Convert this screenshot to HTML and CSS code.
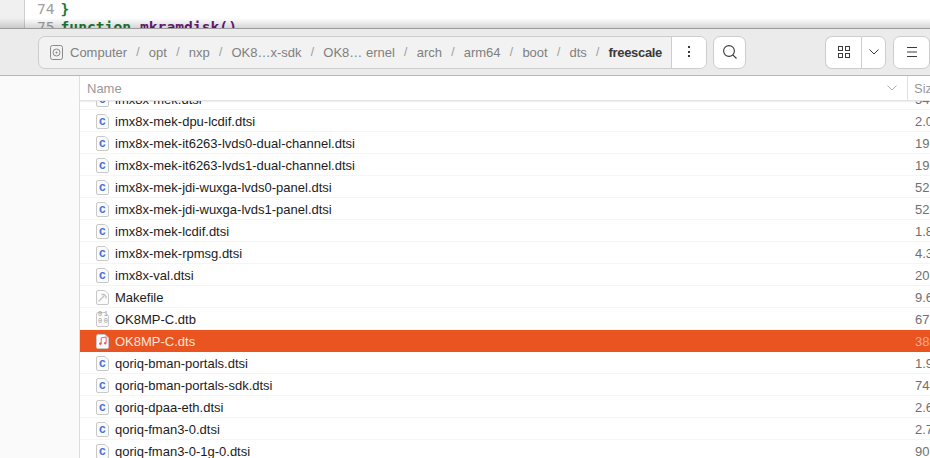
FILE: index.html
```html
<!DOCTYPE html>
<html lang="en">
<head>
  <meta charset="UTF-8">
  <title>freescale</title>
  <link rel="stylesheet" href="styles.css">
</head>
<body>

<svg class="defs" width="0" height="0">
  <symbol id="page" viewBox="0 0 13 15">
    <path d="M2 .5h7l3.500 3.500V13A1.500 1.500 0 0 1 11 14.500H2A1.500 1.500 0 0 1 .5 13V2A1.500 1.500 0 0 1 2 .5z" fill="#fbfbfb" stroke="#c8c8c8"/>
  </symbol>
</svg>

<div class="code">
  <div class="gutter"></div>
  <div class="lines">
    <div class="line"><span class="num">74</span> <b class="green">}</b></div>
    <div class="line"><span class="num">75</span> <b class="green">function</b> <b class="purple">mkramdisk()</b></div>
  </div>
</div>

<div class="window">
  <header class="toolbar">
    <nav class="pathbar">
      <svg class="disk" width="13" height="15" viewBox="0 0 13 15">
        <rect x=".5" y=".5" width="12" height="14" rx="2" fill="none" stroke="#8a8a8a"/>
        <circle cx="6.500" cy="7.500" r="3.500" fill="none" stroke="#8a8a8a"/>
        <circle cx="6.500" cy="7.500" r="1" fill="#8a8a8a"/>
      </svg>
      <span class="crumb first">Computer</span><i>/</i>
      <span class="crumb">opt</span><i>/</i>
      <span class="crumb">nxp</span><i>/</i>
      <span class="crumb">OK8…x-sdk</span><i>/</i>
      <span class="crumb">OK8… ernel</span><i>/</i>
      <span class="crumb">arch</span><i>/</i>
      <span class="crumb">arm64</span><i>/</i>
      <span class="crumb">boot</span><i>/</i>
      <span class="crumb">dts</span><i>/</i>
      <span class="crumb current">freescale</span>
      <button class="path-menu">
        <svg width="4" height="14" viewBox="0 0 4 14"><g fill="#3a3a3a"><rect x="1" y="1" width="2" height="2"/><rect x="1" y="6" width="2" height="2"/><rect x="1" y="10" width="2" height="2"/></g></svg>
      </button>
    </nav>
    <button class="btn search">
      <svg width="14" height="14" viewBox="0 0 14 14" fill="none" stroke="#3a3a3a" stroke-width="1.100"><circle cx="6" cy="6" r="5.400"/><path d="M9.800 9.800L13.500 13.500"/></svg>
    </button>
    <div class="view-group">
      <button class="btn grid">
        <svg width="12" height="12" viewBox="0 0 12 12" fill="none" stroke="#3a3a3a"><rect x=".5" y=".5" width="4" height="4"/><rect x="7.500" y=".5" width="4" height="4"/><rect x=".5" y="7.500" width="4" height="4"/><rect x="7.500" y="7.500" width="4" height="4"/></svg>
      </button>
      <button class="btn arrow">
        <svg width="10" height="6" viewBox="0 0 10 6" fill="none" stroke="#3a3a3a"><path d="M.5 .5L5 5l4.500-4.500"/></svg>
      </button>
    </div>
    <button class="btn menu">
      <svg width="10" height="10" viewBox="0 0 10 10" fill="none" stroke="#3a3a3a"><path d="M0 .5h10M0 5h10M0 9.500h10"/></svg>
    </button>
  </header>

  <div class="content">
    <aside class="sidebar"></aside>
    <section class="files">
      <div class="head">
        <div class="col-name">Name
          <svg width="10" height="6" viewBox="0 0 10 6" fill="none" stroke="#adadad"><path d="M.5 .5L5 5l4.500-4.500"/></svg>
        </div>
        <div class="col-size">Size</div>
      </div>
      <div class="viewport">
        <ul class="rows">
          <li><svg class="ic"><use href="#page"/></svg><b class="c">c</b><span class="name">imx8x-mek.dtsi</span><span class="size">54.1 kB</span></li>
          <li><svg class="ic"><use href="#page"/></svg><b class="c">c</b><span class="name">imx8x-mek-dpu-lcdif.dtsi</span><span class="size">2.0 kB</span></li>
          <li><svg class="ic"><use href="#page"/></svg><b class="c">c</b><span class="name">imx8x-mek-it6263-lvds0-dual-channel.dtsi</span><span class="size">19.6 kB</span></li>
          <li><svg class="ic"><use href="#page"/></svg><b class="c">c</b><span class="name">imx8x-mek-it6263-lvds1-dual-channel.dtsi</span><span class="size">19.6 kB</span></li>
          <li><svg class="ic"><use href="#page"/></svg><b class="c">c</b><span class="name">imx8x-mek-jdi-wuxga-lvds0-panel.dtsi</span><span class="size">52.7 kB</span></li>
          <li><svg class="ic"><use href="#page"/></svg><b class="c">c</b><span class="name">imx8x-mek-jdi-wuxga-lvds1-panel.dtsi</span><span class="size">52.7 kB</span></li>
          <li><svg class="ic"><use href="#page"/></svg><b class="c">c</b><span class="name">imx8x-mek-lcdif.dtsi</span><span class="size">1.8 kB</span></li>
          <li><svg class="ic"><use href="#page"/></svg><b class="c">c</b><span class="name">imx8x-mek-rpmsg.dtsi</span><span class="size">4.3 kB</span></li>
          <li><svg class="ic"><use href="#page"/></svg><b class="c">c</b><span class="name">imx8x-val.dtsi</span><span class="size">20.1 kB</span></li>
          <li>
            <svg class="ic"><use href="#page"/></svg>
            <svg class="glyph" width="9" height="9" viewBox="0 0 9 9" fill="none" stroke="#c0c0c0" stroke-width="1.300"><path d="M.5 8.500L6 3M3.500 1.500h2.500l2 2v2"/></svg>
            <span class="name">Makefile</span><span class="size">9.6 kB</span>
          </li>
          <li>
            <svg class="ic"><use href="#page"/></svg>
            <span class="glyph bin">01<br>00</span>
            <span class="name">OK8MP-C.dtb</span><span class="size">67.4 kB</span>
          </li>
          <li class="selected">
            <svg class="ic"><use href="#page"/></svg>
            <svg class="glyph note" width="8" height="10" viewBox="0 0 9 10" fill="none" stroke="#ef5a6c" stroke-width="1.100"><path d="M2.500 8V1.500l5.500-1V7"/><circle cx="1.500" cy="8" r="1" fill="#ef5a6c"/><circle cx="7" cy="7.500" r="1" fill="#ef5a6c"/></svg>
            <span class="name">OK8MP-C.dts</span><span class="size">38.2 kB</span>
          </li>
          <li><svg class="ic"><use href="#page"/></svg><b class="c">c</b><span class="name">qoriq-bman-portals.dtsi</span><span class="size">1.9 kB</span></li>
          <li><svg class="ic"><use href="#page"/></svg><b class="c">c</b><span class="name">qoriq-bman-portals-sdk.dtsi</span><span class="size">746 B</span></li>
          <li><svg class="ic"><use href="#page"/></svg><b class="c">c</b><span class="name">qoriq-dpaa-eth.dtsi</span><span class="size">2.6 kB</span></li>
          <li><svg class="ic"><use href="#page"/></svg><b class="c">c</b><span class="name">qoriq-fman3-0.dtsi</span><span class="size">2.7 kB</span></li>
          <li><svg class="ic"><use href="#page"/></svg><b class="c">c</b><span class="name">qoriq-fman3-0-1g-0.dtsi</span><span class="size">907 B</span></li>
        </ul>
      </div>
    </section>
  </div>
</div>

</body>
</html>
```

FILE: styles.css
```css
html, body {
  margin: 0;
  height: 458px;
  overflow: hidden;
  background: #fff;
  font-family: "Liberation Sans", sans-serif;
  font-size: 13px;
}
.defs {
  display: block;
  height: 0;
}
button {
  padding: 0;
  font: inherit;
  cursor: pointer;
}

/* editor behind the window */
.code {
  display: flex;
  height: 28px;
  overflow: hidden;
  position: relative;
  background: #fff;
}
.code::after {
  content: "";
  position: absolute;
  left: 0;
  right: 0;
  bottom: 0;
  height: 10px;
  background: linear-gradient(rgba(0, 0, 0, 0), rgba(0, 0, 0, .16));
}
.gutter {
  width: 24px;
  background: #f0f0f0;
  border-right: 1px solid #d0d0d0;
}
.lines {
  padding: 0 0 0 12px;
  font-family: "DejaVu Sans Mono", monospace;
  font-size: 14.67px;
  line-height: 18px;
}
.line {
  white-space: pre;
}
.num {
  color: #a0a0a0;
  margin-right: -3px;
}
.green {
  color: #1e7d32;
}
.purple {
  color: #6a1b7a;
}

.window {
  height: 430px;
  display: flex;
  flex-direction: column;
  border-top: 1px solid #9c9c9c;
  box-sizing: border-box;
}

/* toolbar */
.toolbar {
  height: 47px;
  flex: none;
  box-sizing: border-box;
  display: flex;
  align-items: center;
  padding: 0 0 0 38px;
  background: #ebebeb;
  border-bottom: 1px solid #b8b8b8;
  overflow: hidden;
}
.pathbar {
  width: 669px;
  height: 33px;
  box-sizing: border-box;
  flex: none;
  display: flex;
  align-items: center;
  padding-left: 11px;
  background: #f2f2f2;
  border: 1px solid #cdcdcd;
  border-radius: 7px;
  color: #808080;
  white-space: nowrap;
}
.crumb.first {
  margin-left: 7px;
}
.pathbar i {
  margin: 0 9.22px;
  font-style: normal;
  color: #9a9a9a;
  font-size: 12px;
}
.crumb.current {
  color: #3a3a3a;
  font-weight: bold;
  letter-spacing: -.33px;
}
.path-menu {
  margin-left: auto;
  width: 35px;
  height: 31px;
  display: flex;
  align-items: center;
  justify-content: center;
  background: #fff;
  border: 0;
  border-left: 1px solid #cdcdcd;
  border-radius: 0 6px 6px 0;
}
.btn {
  height: 33px;
  display: flex;
  align-items: center;
  justify-content: center;
  background: #fff;
  border: 1px solid #cdcdcd;
  border-radius: 7px;
}
.search {
  width: 36px;
  margin-left: 6px;
}
.view-group {
  display: flex;
  margin-left: 79px;
}
.grid {
  width: 36px;
  border-right: 0;
  border-radius: 7px 0 0 7px;
}
.arrow {
  width: 25px;
  border-radius: 0 7px 7px 0;
}
.menu {
  width: 37px;
  margin-left: 7px;
  flex: none;
}

/* file list */
.content {
  flex: 1;
  display: flex;
  min-height: 0;
}
.sidebar {
  width: 79px;
  flex: none;
  background: #fafafa;
  border-right: 1px solid #dcdcdc;
}
.files {
  flex: 1;
  min-width: 0;
  display: flex;
  flex-direction: column;
  background: #fff;
}
.head {
  height: 25px;
  flex: none;
  box-sizing: border-box;
  display: flex;
  align-items: center;
  color: #999;
  border-bottom: 1px solid #e4e4e4;
  box-shadow: 0 1px 1px #eee;
  position: relative;
  overflow: hidden;
}
.col-name {
  flex: 1;
  height: 100%;
  display: flex;
  align-items: center;
  justify-content: space-between;
  padding: 0 10px 0 7px;
  border-right: 1px solid #e0e0e0;
}
.col-size {
  width: 22px;
  padding-left: 6px;
  box-sizing: border-box;
  overflow: hidden;
  white-space: nowrap;
}
.viewport {
  flex: 1;
  min-height: 0;
  overflow: hidden;
}
.rows {
  list-style: none;
  margin: -13px 0 0;
  padding: 0;
}
.rows li {
  height: 22px;
  box-sizing: border-box;
  display: flex;
  align-items: center;
  position: relative;
  padding: 2px 0 0 16px;
  border-bottom: 1px solid #f5f5f5;
  color: #1c1c1c;
  white-space: nowrap;
}
.ic {
  width: 13px;
  height: 15px;
  flex: none;
}
/* letters and marks sit on top of the page icon */
.c {
  position: absolute;
  left: 19px;
  top: 4px;
  color: #4a6fd8;
  font-size: 12px;
}
.glyph {
  position: absolute;
  left: 18px;
  top: 7px;
}
.glyph.note {
  left: 19px;
  top: 6px;
}
.bin {
  top: 3px;
  left: 18px;
  font-size: 7px;
  line-height: 7px;
  color: #9a9a9a;
  letter-spacing: 1.5px;
  font-family: "Liberation Mono", monospace;
}
.name {
  margin-left: 6px;
  flex: 1;
}
.size {
  width: 15px;
  flex: none;
  overflow: hidden;
  color: #707070;
}
.rows li.selected {
  background: #e95420;
  color: #fff;
  border-bottom-color: #e95420;
}
.selected .name {
  color: #fde4da;
}
.selected .size {
  color: #f7a98c;
}
```
